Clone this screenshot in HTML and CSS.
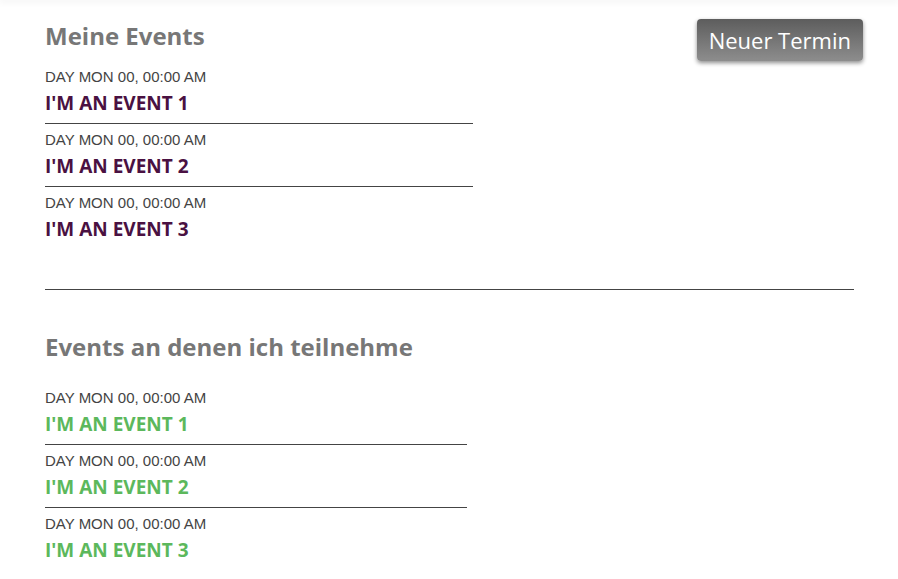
FILE: index.html
```html
<!DOCTYPE html>
<html lang="de">
<head>
<meta charset="utf-8">
<title>Events</title>
<link rel="stylesheet" href="styles.css">
</head>
<body>
<div class="topbar"></div>
<main class="page">
  <section class="section">
    <div class="section-head">
      <h2 class="heading">Meine Events</h2>
      <button class="btn" type="button">Neuer Termin</button>
    </div>
    <ul class="events events-own">
      <li class="event"><div class="event-date">DAY MON 00, 00:00 AM</div><div class="event-title">I'M AN EVENT 1</div></li>
      <li class="event"><div class="event-date">DAY MON 00, 00:00 AM</div><div class="event-title">I'M AN EVENT 2</div></li>
      <li class="event"><div class="event-date">DAY MON 00, 00:00 AM</div><div class="event-title">I'M AN EVENT 3</div></li>
    </ul>
  </section>
  <hr class="divider">
  <section class="section">
    <h2 class="heading heading-second">Events an denen ich teilnehme</h2>
    <ul class="events events-joined">
      <li class="event"><div class="event-date">DAY MON 00, 00:00 AM</div><div class="event-title">I'M AN EVENT 1</div></li>
      <li class="event"><div class="event-date">DAY MON 00, 00:00 AM</div><div class="event-title">I'M AN EVENT 2</div></li>
      <li class="event"><div class="event-date">DAY MON 00, 00:00 AM</div><div class="event-title">I'M AN EVENT 3</div></li>
    </ul>
  </section>
</main>
</body>
</html>
```

FILE: styles.css
```css
* { box-sizing: border-box; }
html, body { margin: 0; padding: 0; background: #fff; }
body { font-family: "Open Sans", "Liberation Sans", sans-serif; overflow: hidden; }

.topbar {
  height: 0;
  box-shadow: 0 0 7px 1px rgba(0, 0, 0, 0.12);
}

.page {
  padding: 20px 35px 0 45px;
}

.section-head {
  display: flex;
  justify-content: space-between;
  align-items: flex-start;
}

.heading {
  margin: 0 0 9px;
  font-size: 24px;
  line-height: 32px;
  font-weight: 700;
  color: #777;
}

.heading-second {
  margin-bottom: 19px;
}

.btn {
  margin-top: -1px;
  height: 42px;
  padding: 0 12px;
  border: 0;
  border-radius: 4px;
  background: linear-gradient(to bottom, #5d5d5d, #8d8d8d);
  box-shadow: 0 2px 4px rgba(0, 0, 0, 0.45);
  color: #fff;
  font-family: "Open Sans", sans-serif;
  font-size: 22px;
  line-height: 42px;
  font-weight: 400;
}

.events {
  list-style: none;
  margin: 0;
  padding: 0;
}

.events-own { width: 428px; }
.events-joined { width: 422px; }

.event {
  padding: 7px 0 8px;
  border-bottom: 1px solid #444;
}
.event:last-child { border-bottom: 0; }

.event-date {
  font-family: "Liberation Sans", Arial, sans-serif;
  font-size: 15px;
  line-height: 18px;
  color: #444;
}

.event-title {
  margin-top: 5px;
  font-size: 19px;
  line-height: 24px;
  font-weight: 700;
}

.events-own .event-title { color: #4a1142; }
.events-joined .event-title { color: #5cb85c; }

.divider {
  margin: 40px 9px 41px 0;
  border: 0;
  border-top: 1px solid #444;
  height: 0;
}
```
